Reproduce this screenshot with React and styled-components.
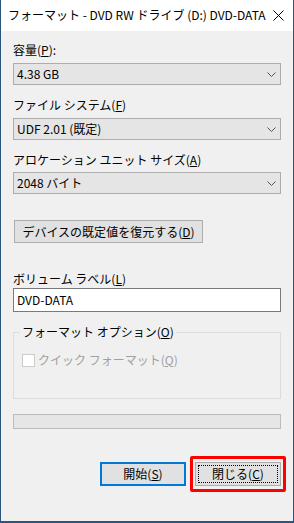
import React from 'react';
import styled, { createGlobalStyle } from 'styled-components';

const GlobalStyle = createGlobalStyle`
	html, body {
		margin: 0;
		padding: 0;
		background: #f0f0f0;
	}
	* {
		box-sizing: border-box;
	}
`;

const Window = styled.div`
	width: 294px;
	height: 523px;
	display: flex;
	flex-direction: column;
	background: #f0f0f0;
	border: 1px solid #2a567d;
	border-top: none;
	border-bottom-width: 2px;
	font-family: "Noto Sans CJK JP", "Noto Sans", sans-serif;
	font-size: 12px;
	line-height: 16px;
	color: #000;
`;

const TitleBar = styled.div`
	height: 31px;
	flex: none;
	background: #fff;
	display: flex;
	align-items: center;
	justify-content: space-between;
	padding: 0 9px 1px 7px;
	font-size: 12px;
`;

const Body = styled.div`
	flex: 1;
	display: flex;
	flex-direction: column;
	padding: 11px 12px 0;
`;

const Field = styled.div`
	display: flex;
	flex-direction: column;
	margin-bottom: ${p => p.$gap ?? 12}px;
`;

const Label = styled.div`
	height: 16px;
	margin-bottom: ${p => p.$gap ?? 5}px;
	white-space: nowrap;
`;

const Select = styled.div`
	height: 22px;
	border: 1px solid #adadad;
	background: #e5e5e5;
	display: flex;
	align-items: center;
	justify-content: space-between;
	padding: 0 4px 0 3px;
`;

const TextInput = styled.div`
	height: 24px;
	border: 1px solid #7a7a7a;
	background: #fff;
	display: flex;
	align-items: center;
	padding: 0 3px;
`;

const Button = styled.div`
	width: ${p => p.$width ?? 86}px;
	height: ${p => p.$height ?? 24}px;
	background: #e1e1e1;
	border: ${p => (p.$primary ? '2px solid #0078d7' : '1px solid #adadad')};
	display: flex;
	align-items: center;
	justify-content: center;
	position: relative;
	flex: none;
	${p => p.$focused && `
		&::after {
			content: '';
			position: absolute;
			inset: 2px;
			border: 1px dotted #000;
		}
	`}
`;

const RestoreButton = styled(Button)`
	margin: 14px 0 0 1px;
	align-self: flex-start;
`;

const GroupBox = styled.fieldset`
	margin: 12px 0 0;
	height: 75px;
	border: 1px solid #dcdcdc;
	padding: 0 6px;
	min-width: 0;
`;

const Legend = styled.legend`
	padding: 0 2px;
	line-height: 16px;
`;

const CheckRow = styled.div`
	display: flex;
	align-items: center;
	margin: 12px 0 0 2px;
	color: #a0a0a0;
`;

const CheckBox = styled.span`
	width: 13px;
	height: 13px;
	border: 1px solid #cccccc;
	background: #fff;
	margin-right: 3px;
	flex: none;
`;

const Progress = styled.div`
	margin-top: 15px;
	height: 15px;
	border: 1px solid #bcbcbc;
	background: #e6e6e6;
`;

const ButtonRow = styled.div`
	margin-top: 33px;
	display: flex;
	justify-content: flex-end;
	gap: 9px;
`;

const Highlight = styled.div`
	margin: -6px -5px;
	padding: 3px 2px;
	border: 3px solid #ff0000;
	border-radius: 2px;
`;

const Key = styled.u`
	text-underline-offset: 1px;
`;

function Chevron() {
	return (
		<svg width="9" height="5" viewBox="0 0 9 5">
			<path d="M0.5 0.5 L4.5 4.5 L8.5 0.5" fill="none" stroke="#555" strokeWidth="1" />
		</svg>
	);
}

function CloseIcon() {
	return (
		<svg width="11" height="11" viewBox="0 0 11 11">
			<path d="M0.5 0.5 L10.5 10.5 M10.5 0.5 L0.5 10.5" stroke="#000" strokeWidth="1" />
		</svg>
	);
}

export default function App() {
	return (
		<>
			<GlobalStyle />
			<Window>
				<TitleBar>
					<span>フォーマット - DVD RW ドライブ (D:) DVD-DATA</span>
					<CloseIcon />
				</TitleBar>
				<Body>
					<Field>
						<Label>容量(<Key>P</Key>):</Label>
						<Select>4.38 GB<Chevron /></Select>
					</Field>
					<Field>
						<Label>ファイル システム(<Key>F</Key>)</Label>
						<Select>UDF 2.01 (既定)<Chevron /></Select>
					</Field>
					<Field>
						<Label $gap={4}>アロケーション ユニット サイズ(<Key>A</Key>)</Label>
						<Select>2048 バイト<Chevron /></Select>
					</Field>

					<RestoreButton $width={189} $height={23}>
						デバイスの既定値を復元する(<Key>D</Key>)
					</RestoreButton>

					<Field $gap={0} style={{ marginTop: 28 }}>
						<Label $gap={1}>ボリューム ラベル(<Key>L</Key>)</Label>
						<TextInput>DVD-DATA</TextInput>
					</Field>

					<GroupBox>
						<Legend>フォーマット オプション(<Key>O</Key>)</Legend>
						<CheckRow>
							<CheckBox />
							クイック フォーマット(<Key>Q</Key>)
						</CheckRow>
					</GroupBox>

					<Progress />

					<ButtonRow>
						<Button $primary>開始(<Key>S</Key>)</Button>
						<Highlight>
							<Button $focused>閉じる(<Key>C</Key>)</Button>
						</Highlight>
					</ButtonRow>
				</Body>
			</Window>
		</>
	);
}
